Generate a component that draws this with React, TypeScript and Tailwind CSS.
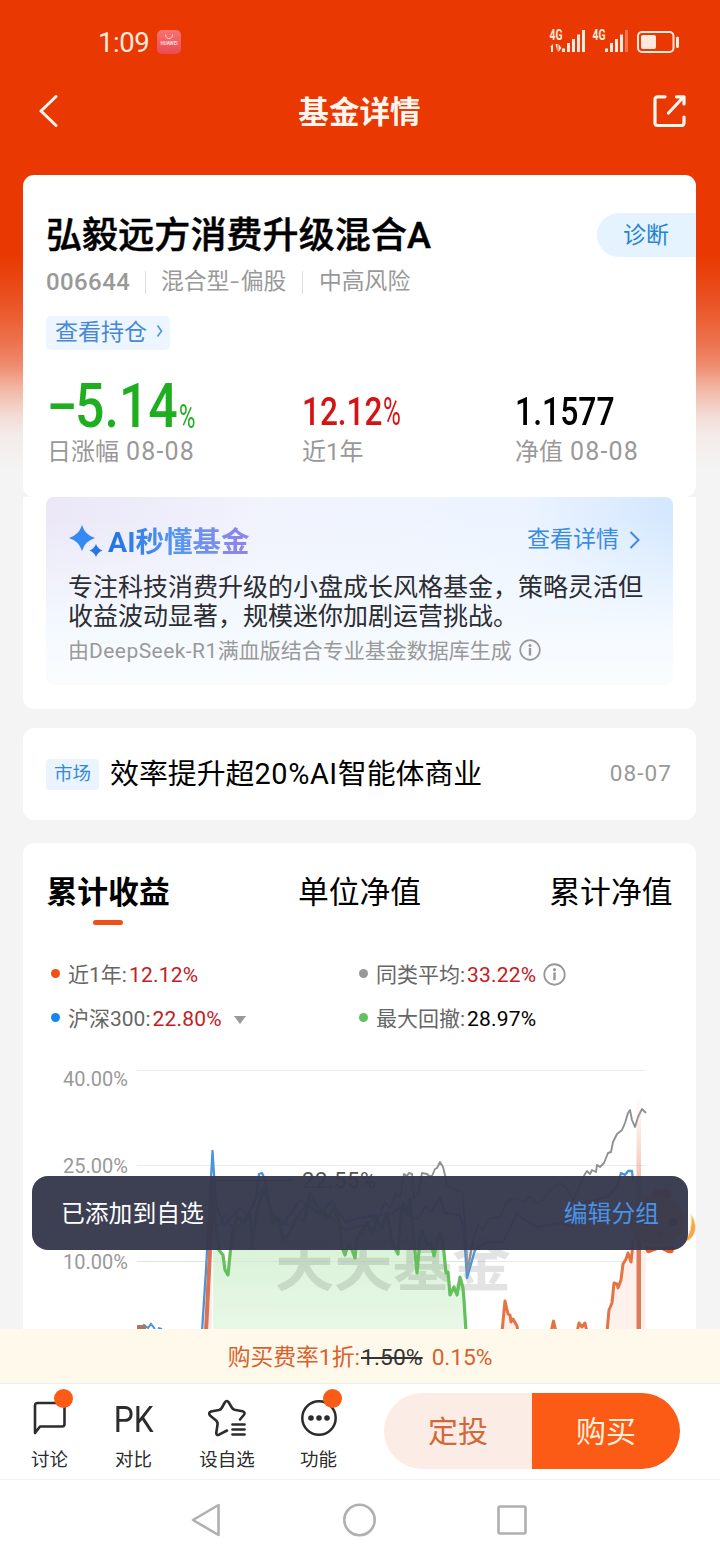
import type { ReactNode } from "react"

const StatusBar = () => (
  <div className="flex h-[84px] items-center pl-[98px] text-[#ffe9df]">
    <span className="mt-[2px] w-[59px] text-[27.5px] font-normal leading-none tracking-[-0.4px] whitespace-nowrap">1:09</span>
    <div className="flex h-6 w-6 flex-col items-center rounded-[5px] bg-linear-to-b from-[#f8716f] to-[#e94b55] text-[#ffd9d6]">
      <svg width="10" height="6" viewBox="0 0 10 6" className="mt-1" fill="none" stroke="currentColor">
        <path d="M1.5 0.5c0 5.5 7 5.5 7 0" />
      </svg>
      <span className="text-[4.600px] font-bold leading-[8px]">HUAWEI</span>
    </div>
    <svg width="132" height="30" viewBox="548 27 132 30" className="ml-[367px]" fill="currentColor">
      <text x="549.5" y="40" fontSize="14" fontWeight="700" textLength="13" lengthAdjust="spacingAndGlyphs">4G</text>
      <path d="M550 47l3-3v8h-2v-5zM555.500 44h2v8zM558.500 44l3 4-3 4z" />
      <path d="M562 48.500h3v3.500h-3zM567 43h3v9h-3zM572 39h3v13h-3zM577 34.500h3v17.500h-3zM582 30h3v22h-3z" />
      <text x="592.5" y="40" fontSize="14" fontWeight="700" textLength="13" lengthAdjust="spacingAndGlyphs">4G</text>
      <path d="M605 48.500h3v3.500h-3zM610 43h3v9h-3zM615 39h3v13h-3zM620 34.500h3v17.500h-3z" />
      <path d="M625 30h3v22h-3z" opacity="0.35" />
      <rect x="638" y="32" width="35.500" height="20" rx="4" fill="none" stroke="currentColor" strokeWidth="2" />
      <rect x="641" y="35" width="15" height="14" rx="2" />
      <rect x="676" y="36.500" width="3" height="11.500" rx="1.500" />
    </svg>
  </div>
)

const TitleBar = () => (
  <div className="flex h-[91px] items-start justify-between pt-2 pr-[33px] pl-[39px] text-[#fff6ef]">
    <svg width="20" height="36" viewBox="0 0 20 36" fill="none" stroke="currentColor" strokeWidth="3" strokeLinecap="round" strokeLinejoin="round">
      <path d="M17 4.500L2 19l15 14.500" />
    </svg>
    <h1 className="mt-px ml-[7px] text-[30.600px] font-bold leading-[40px]">基金详情</h1>
    <svg width="34" height="36" viewBox="0 0 34 36" fill="none" stroke="currentColor" strokeWidth="3.200" strokeLinecap="round" strokeLinejoin="round">
      <path d="M12 4.800H4.500a2.500 2.500 0 0 0-2.500 2.500V31a2.500 2.500 0 0 0 2.500 2.500H28.500a2.500 2.500 0 0 0 2.500-2.500V25" />
      <path d="M15.500 21L30.500 5M23.500 4.800H31V12" />
    </svg>
  </div>
)

const InfoIcon = ({ size }: { size: number }) => (
  <svg width={size} height={size} viewBox="0 0 22 22" fill="none" stroke="#999" strokeWidth="1.700">
    <circle cx="11" cy="11" r="9.800" />
    <path d="M11 9v7.500" strokeWidth="2.400" />
    <circle cx="11" cy="6.400" r="1.500" fill="#999" stroke="none" />
  </svg>
)

const FundSummary = () => (
  <section className="h-[322px] rounded-[11px] bg-white pl-[23px]">
    <div className="flex h-[82px] items-end justify-between">
      <h2 className="text-[36px] font-medium leading-[42px] tracking-[0.1px] text-black [-webkit-text-stroke:0.5px_#000]">弘毅远方消费升级混合A</h2>
      <div className="h-11 w-[99px] rounded-l-full bg-[#e5f3fe] pl-[26px] text-[23px] leading-[46px] text-[#2484d2]">诊断</div>
    </div>
    <div className="mt-[9px] flex h-[32px] items-center text-[22.8px] text-[#999]">
      <span className="w-[99px] text-[24px] font-medium tracking-[0.4px]">006644</span>
      <i className="h-[23px] w-px bg-[#ddd]" />
      <span className="ml-[15px] w-[141px]">
        混合型<span className="mx-px inline-block scale-x-[1.4] px-[1.5px]">-</span>偏股
      </span>
      <i className="h-[23px] w-px bg-[#ddd]" />
      <span className="ml-4">中高风险</span>
    </div>
    <button className="mt-[18px] flex h-[34px] w-[124px] items-center rounded-[5px] bg-[#edf5fe] pl-[9px] text-[23px] text-[#4688d3]">
      <span className="leading-[32px]">查看持仓</span>
      <svg width="8" height="14" viewBox="0 0 8 14" className="mb-1 ml-[9px]" fill="none" stroke="#4d9ae0" strokeWidth="1.700">
        <path d="M1.500 1.500l4 5.500-4 5.500" />
      </svg>
    </button>
    <div className="mt-6 flex">
      <div className="w-[256px] pl-px">
        <div className="flex h-[62px] items-end whitespace-nowrap text-[#1fae1f]">
          <b className="inline-block w-[28px] origin-left scale-x-[1.5] text-[60px] font-medium leading-[64px]">-</b>
          <b className="inline-block w-[104px] origin-left scale-x-[0.85] text-[61px] font-medium leading-[59px]">5.14</b>
          <span className="inline-block origin-left scale-x-[0.68] text-[33px] leading-[38px]">%</span>
        </div>
        <p className="text-[24px] leading-[32px] text-[#999]">
          日涨幅 <span className="ml-px text-[25px] tracking-[1.200px]">08-08</span>
        </p>
      </div>
      <div className="w-[213px]">
        <div className="flex h-[62px] items-end whitespace-nowrap text-[#d41414]">
          <b className="inline-block w-[81px] origin-left scale-x-[0.83] text-[38px] font-medium leading-[47px]">12.12</b>
          <span className="inline-block origin-left scale-x-[0.64] text-[38px] leading-[47px]">%</span>
        </div>
        <p className="text-[24px] leading-[32px] text-[#999]">近1年</p>
      </div>
      <div>
        <div className="flex h-[62px] items-end text-black">
          <b className="inline-block origin-left scale-x-[0.84] text-[38px] font-medium leading-[47px]">1.1577</b>
        </div>
        <p className="text-[24px] leading-[32px] text-[#999]">
          净值 <span className="ml-px text-[25px] tracking-[1.200px]">08-08</span>
        </p>
      </div>
    </div>
  </section>
)

const AiInsight = () => (
  <section className="h-[212px] rounded-b-[11px] bg-white px-[23px]">
    <div className="h-[188px] rounded-lg bg-[linear-gradient(to_bottom,transparent_10%,#f4f9ff_70%,#fafdff_100%),linear-gradient(to_right,#ebe7f7_0%,#f1f3fd_35%,#edf4ff_75%,#d3e7ff_100%)] pt-[25px] pl-[22px]">
      <div className="flex h-9 items-center">
        <svg width="36" height="34" viewBox="0 0 36 34" fill="#348af0">
          <path d="M14 2q3 10 13 13q-10 3-13 13q-3-10-13-13q10-3 13-13z" />
          <path d="M28 21q1.800 4.800 6.500 6.500q-4.700 1.800-6.500 6.500q-1.800-4.700-6.500-6.500q4.700-1.700 6.500-6.500z" fill="#2876e4" />
        </svg>
        <h3 className="mt-[5px] ml-1 bg-linear-to-r from-[#1f72e4] via-[#5697f3] to-[#9182ea] bg-clip-text text-[28.5px] font-bold leading-9 text-transparent">AI秒懂基金</h3>
        <span className="ml-auto pt-px text-[23px] text-[#3b8cde]">查看详情</span>
        <svg width="12" height="20" viewBox="0 0 12 20" className="mr-8 ml-[10px]" fill="none" stroke="#3b8cde" strokeWidth="2">
          <path d="M1.500 2l8 8-8 8" />
        </svg>
      </div>
      <p className="mt-[15px] text-[25px] leading-[29px] whitespace-nowrap text-[#2b2d31]">
        专注科技消费升级的小盘成长风格基金，策略灵活但
        <br />
        收益波动显著，规模迷你加剧运营挑战。
      </p>
      <div className="mt-[5px] flex h-[31px] items-center gap-[7px] text-[21px] text-[#999]">
        <span className="whitespace-nowrap">由<span className="tracking-[0.45px]">DeepSeek-R1</span>满血版结合专业基金数据库生成</span>
        <span className="mb-[3px]"><InfoIcon size={22} /></span>
      </div>
    </div>
  </section>
)

const NewsCard = () => (
  <section className="mt-[19px] flex h-[92px] items-center rounded-[11px] bg-white pr-6 pl-[23px]">
    <span className="h-[31px] w-[53px] rounded bg-[#e9f4ff] text-center text-[18.5px] leading-[31px] text-[#348ad8]">市场</span>
    <span className="mt-[2px] ml-[11px] text-[28.9px] text-black">效率提升超<span className="tracking-[0.6px]">20%AI</span>智能体商业</span>
    <span className="ml-auto text-[22.5px] tracking-[1.100px] text-[#999]">08-07</span>
  </section>
)

interface LegendProps {
  dot: string
  label: string
  value: string
  valueClass: string
  children?: ReactNode
}

const Legend = ({ dot, label, value, valueClass, children }: LegendProps) => (
  <div className="flex h-11 items-center text-[21px]">
    <i className={`mb-[1px] h-[9px] w-[9px] rounded-full ${dot}`} />
    <span className="mt-[3px] ml-2 text-[#666]">{label}:</span>
    <span className={`mt-[3px] ml-[2px] tracking-[0.2px] ${valueClass}`}>{value}</span>
    {children}
  </div>
)

const GREEN =
  "213,1180 215,1217 219,1250 223,1255 225,1270 228,1275 231,1245 233,1230 237,1217 244,1222 250,1213 252,1248 256,1215 260,1200 265,1187 269,1205 273,1223 278,1218 283,1240 290,1232 297,1217 304,1222 310,1193 320,1210 328,1217 335,1207 339,1222 342,1247 345,1255 348,1244 352,1250 355,1258 357,1238 360,1233 367,1223 372,1233 377,1220 382,1228 387,1213 393,1245 398,1254 400,1225 403,1203 407,1212 410,1200 413,1230 417,1273 420,1240 422,1231 427,1245 431,1243 434,1256 437,1242 440,1233 443,1243 446,1273 448,1272 450,1295 454,1287 457,1295 460,1277 463,1288 464,1300 466,1332"

const GREY =
  "215,1230 225,1215 235,1232 250,1210 262,1188 272,1215 290,1226 310,1200 330,1216 345,1230 365,1225 380,1215 385,1202 390,1208 396,1193 400,1198 404,1174 407,1176 409,1173 412,1174 414,1198 418,1195 422,1173 427,1174 429,1176 432,1176 435,1169 437,1168 440,1162 443,1167 445,1175 447,1185 454,1189 463,1193 467,1273 473,1240 478,1225 482,1230 490,1218 500,1217 507,1201 515,1198 524,1202 530,1196 536,1203 543,1200 550,1190 560,1183 567,1189 573,1200 580,1185 585,1174 587,1171 590,1174 592,1170 596,1172 597,1165 600,1167 604,1163 608,1153 611,1152 613,1142 617,1134 622,1130 625,1123 628,1113 630,1110 632,1120 635,1127 638,1117 642,1109 646,1113"

const BLUE =
  "202,1332 206,1270 212.500,1151 216,1205 224,1225 232,1217 240,1208 248,1215 256,1198 259,1174 262,1173 265,1180 272,1214 283,1225 300,1200 320,1214 332,1201 345,1222 360,1218 378,1215 393,1213 400,1207 407,1215 418,1219 425,1207 431,1212 440,1198 445,1213 460,1215 464,1233 467,1278 475,1250 487,1242 503,1242 509,1230 517,1213 525,1220 537,1227 560,1223 573,1227 583,1203 607,1197 617,1187 621,1173 625,1175 628,1171 632,1171 633,1181"

const ReturnChart = () => (
  <svg width="673" height="276" viewBox="23 1053 673 276" fill="none">
    <defs>
      <linearGradient id="drawdown" x1="0" y1="0" x2="0" y2="1">
        <stop offset="0" stopColor="#c9edc5" />
        <stop offset="1" stopColor="#e6f7e5" />
      </linearGradient>
      <linearGradient id="marker" x1="0" y1="1095" x2="0" y2="1240" gradientUnits="userSpaceOnUse">
        <stop offset="0" stopColor="#f5b49c" stopOpacity="0" />
        <stop offset="1" stopColor="#df7b5b" />
      </linearGradient>
    </defs>
    <g fill="#999" fontSize="20">
      <text x="63" y="1086" textLength="65">40.00%</text>
      <text x="63" y="1173" textLength="65">25.00%</text>
      <text x="63" y="1269" textLength="65">10.00%</text>
    </g>
    <path d="M137 1070.500H646M137 1165.500H646M137 1261.500H646" stroke="#ebebeb" />
    <polygon points={`${GREEN} 213,1332`} fill="url(#drawdown)" opacity="0.9" />
    <path d="M204 1332L212 1180V1332z" fill="#fbeee8" />
    <path d="M137 1261.500H466" stroke="#dbe6da" />
    <text x="275" y="1286" fontSize="59" fontWeight="700" fill="#000" fillOpacity="0.11" textLength="236">天天基金</text>
    <path d="M213 1180.500H292" stroke="#555" />
    <text x="302" y="1188" fontSize="22" fill="#555" textLength="74">22.55%</text>
    <polyline points={GREY} stroke="#8e9096" strokeWidth="1.900" strokeLinejoin="round" />
    <polyline points={BLUE} stroke="#4a94da" strokeWidth="2.300" strokeLinejoin="round" />
    <path d="M465 1215L467.500 1272L473 1240" stroke="#8e9096" strokeWidth="2" />
    <path d="M141 1329l3-4 4 3 3-4 4 5M158 1328l4 1" stroke="#4a94da" strokeWidth="2" />
    <path d="M137 1327h9" stroke="#a97763" strokeWidth="4" />
    <path d="M206 1332L210 1250L213 1185" stroke="#dc7050" strokeWidth="4" />
    <polyline points={GREEN} stroke="#65bf5d" strokeWidth="3.200" strokeLinejoin="round" />
    <path d="M502 1332l3-31 4 15 2 5 2-3 5 13zM607 1332l2-25 5-23 4 4 5-24 5-10 4 8 3-20 11-35v125z" fill="#fef1ec" />
    <path
      d="M502 1332l3-31 3 13 2 1 1 7 2-3 4 7 1 6M551 1332l2.500-11 2.500 11M577 1332l2-9 3 4 3-4 2 9M607 1332l2-22 3-7 2-20 3 1 1 4 3-8 2-16 3-5 2-6 2 6 1 3 2-18 6-22"
      stroke="#e57445"
      strokeWidth="3"
      strokeLinejoin="round"
    />
    <rect x="636.500" y="1095" width="4.500" height="234" fill="url(#marker)" />
    {/* 吉祥物 */}
    <g>
      <path d="M650 1198q6-14 12-8q7-6 10 8z" fill="#f05a28" />
      <ellipse cx="657" cy="1221" rx="28" ry="25" fill="#ffc44d" />
      <circle cx="646" cy="1222" r="4" fill="#333" />
      <circle cx="673" cy="1222" r="4" fill="#333" />
      <path d="M653 1232h14l-7 7z" fill="#ee6432" />
      <path d="M645 1246q0 10 7 6l8-3 8 4q7 2 6-7z" fill="#ef5c25" />
      <path d="M684 1242q9-10 7-28q8 13 2 22q-3 5-9 6z" fill="#f5a54e" stroke="#ffe6a8" />
    </g>
  </svg>
)

const ChartCard = () => (
  <section className="mt-[23px] h-[486px] rounded-t-[11px] bg-white">
    <div className="flex justify-between px-[23.500px] pt-[28px] text-[30.8px] leading-[44px] text-black">
      <div className="flex flex-col items-center">
        <span className="font-bold">累计收益</span>
        <i className="mt-[5px] h-[5px] w-[30px] rounded-full bg-[#ed5117]" />
      </div>
      <span>单位净值</span>
      <span>累计净值</span>
    </div>
    <div className="mt-[27px] grid grid-cols-[308px_1fr] pl-7">
      <Legend dot="bg-[#ee5016]" label="近1年" value="12.12%" valueClass="text-[#c4201f]" />
      <Legend dot="bg-[#999]" label="同类平均" value="33.22%" valueClass="text-[#c4201f]">
        <span className="ml-[7px]"><InfoIcon size={23} /></span>
      </Legend>
      <Legend dot="bg-[#1687ea]" label="沪深300" value="22.80%" valueClass="text-[#c4201f]">
        <svg width="12" height="8" viewBox="0 0 12 8" className="mt-[3px] ml-3" fill="#999"><path d="M0 0h12L6 8z" /></svg>
      </Legend>
      <Legend dot="bg-[#5fc25e]" label="最大回撤" value="28.97%" valueClass="text-black" />
    </div>
    <div className="mt-[13px]">
      <ReturnChart />
    </div>
  </section>
)

const Toast = () => (
  <div className="absolute top-[1176px] left-8 flex h-[74px] w-[656px] items-center justify-between rounded-2xl bg-[#37394d]/97 pt-[4px] pr-[29px] pl-[29px] text-[23.8px]">
    <span className="text-white">已添加到自选</span>
    <button className="text-[#4a92e6]">编辑分组</button>
  </div>
)

const Action = ({ label, badge, className, children }: { label: string; badge?: boolean; className: string; children: ReactNode }) => (
  <button className={`relative flex flex-col items-center pt-3 text-[#2c2c2c] ${className}`}>
    <span className="flex h-11 items-center">{children}</span>
    <span className="mt-[5px] text-[18.5px] leading-[30px] whitespace-nowrap">{label}</span>
    {badge && <i className="absolute top-[5px] right-[-5px] h-[19px] w-[19px] rounded-full bg-[#fb5b14]" />}
  </button>
)

const BottomBar = () => (
  <div className="flex h-[96px] border-b border-[#f1f1f1] bg-white">
    <Action label="讨论" badge className="ml-[31px] w-[37px]">
      <svg width="36" height="36" viewBox="0 0 36 36" fill="none" stroke="currentColor" strokeWidth="2.600" strokeLinejoin="round">
        <path d="M5.500 3H30a2.500 2.500 0 0 1 2.500 2.500V24a2.500 2.500 0 0 1-2.500 2.500H8L3 33V5.500A2.500 2.500 0 0 1 5.500 3z" />
      </svg>
    </Action>
    <Action label="对比" className="ml-[47px] w-[37px]">
      <span className="mt-[3px] inline-block scale-x-[0.88] text-[36px] leading-none">PK</span>
    </Action>
    <Action label="设自选" className="ml-[47px] w-[56px]">
      <svg width="40" height="38" viewBox="0 0 40 38" fill="none" stroke="currentColor" strokeWidth="2.600" strokeLinecap="round" strokeLinejoin="round">
        <path d="M20 31.500l-8 4.200q-3 1-2.700-2l1.300-8.700q0-2-1.500-3.500L3 16.500q-2-3 1-4l8-1.500q2-.7 3-2.500L17.800 3.500q2-3 4 0l3 5q1 1.800 2.700 2.300l8 1.500q3.300 1 1.300 3.700L33 20.500" />
        <path d="M25.500 25.500h12M25.500 30.500h12M25.500 35.500h12" strokeWidth="2.700" />
      </svg>
    </Action>
    <Action label="功能" badge className="ml-[45px] w-[37px]">
      <svg width="38" height="38" viewBox="0 0 38 38" fill="none" stroke="currentColor" strokeWidth="2.500">
        <circle cx="19" cy="19" r="16.700" />
        <g fill="currentColor" stroke="none">
          <circle cx="11" cy="19" r="2.800" />
          <circle cx="19" cy="19" r="2.800" />
          <circle cx="27" cy="19" r="2.800" />
        </g>
      </svg>
    </Action>
    <div className="mt-[9px] ml-[47px] flex h-[76px] w-[296px] overflow-hidden rounded-full text-[30px] leading-[78px]">
      <button className="w-1/2 bg-[#fcece6] text-[#d1683a]">定投</button>
      <button className="w-1/2 bg-[#fb5b14] text-[#fff0dc]">购买</button>
    </div>
  </div>
)

const SystemNav = () => (
  <div className="flex h-20 items-center gap-[118px] bg-white pl-[190px] text-[#b0b0b0]">
    <svg width="32" height="36" viewBox="0 0 32 36" fill="none" stroke="currentColor" strokeWidth="2.600" strokeLinejoin="round">
      <path d="M28.500 3v30L3 18z" />
    </svg>
    <svg width="36" height="36" viewBox="0 0 36 36" fill="none" stroke="currentColor" strokeWidth="2.600">
      <circle cx="19.500" cy="18" r="15.200" />
    </svg>
    <svg width="36" height="36" viewBox="0 0 36 36" fill="none" stroke="currentColor" strokeWidth="2.600">
      <rect x="4.500" y="4.500" width="27" height="27" rx="1.500" />
    </svg>
  </div>
)

const App = () => {
  return (
    <div className="flex h-[1560px] w-[720px] flex-col overflow-hidden bg-white font-[Roboto,'Noto_Sans_CJK_SC',sans-serif]">
      <main className="relative h-[1329px] overflow-hidden bg-[#f4f4f4] bg-[linear-gradient(to_bottom,#e93801_0px,#e93801_255px,#ea5223_300px,#ed704b_340px,#ee8b6d_365px,#f2b9a7_390px,#f2dbd4_415px,#f4ebe9_435px,#f4f4f4_470px)]">
        <StatusBar />
        <TitleBar />
        <div className="mr-6 ml-[23px]">
          <FundSummary />
          <AiInsight />
          <NewsCard />
          <ChartCard />
        </div>
        <Toast />
      </main>
      <div className="flex h-[55px] items-center justify-center border-b border-[#eeeeee] bg-[#fff9eb] pt-[5px] text-[22.8px] text-[#d8622b]">
        <span className="mr-px">购买费率1折:</span>
        <span className="tracking-[-1.800px] text-[#333] line-through"><span className="tracking-[0.1px]">1.50%</span></span>
        <span className="ml-[9px] tracking-[-0.1px]">0.15%</span>
      </div>
      <BottomBar />
      <SystemNav />
    </div>
  )
}

export default App
